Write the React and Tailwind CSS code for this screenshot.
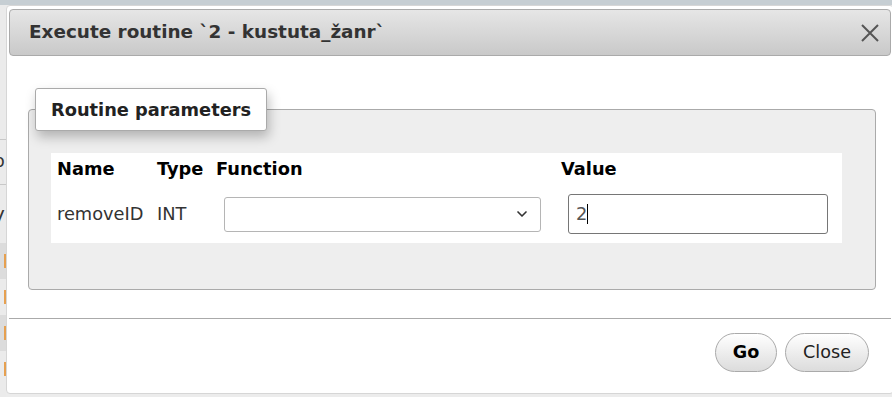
import { ChevronDown } from "lucide-react";

const font = { fontFamily: '"DejaVu Sans", Verdana, sans-serif' };

function PageStrip() {
  // slice of the page that sits behind the dialog
  return (
    <div className="w-[6px] shrink-0 flex flex-col bg-[#ebebeb] overflow-hidden text-[17.6px] leading-none text-[#333]">
      <div className="h-[135px] border-b border-[#c8c8c8]" />
      <div className="h-[45px] border-b border-[#c8c8c8] flex items-center -ml-[6px]">o</div>
      <div className="h-[58px] flex items-center -ml-[7px] text-[20px]">y</div>
      <div className="h-[36px] bg-[#dcdcdc] flex items-center">
        <span className="w-[2px] h-[14px] bg-[#e6a050] ml-[4px]" />
      </div>
      <div className="h-[36px] flex items-center">
        <span className="w-[2px] h-[14px] bg-[#e6a050] ml-[4px]" />
      </div>
      <div className="h-[36px] bg-[#dcdcdc] flex items-center">
        <span className="w-[2px] h-[14px] bg-[#e6a050] ml-[4px]" />
      </div>
      <div className="h-[36px] flex items-center">
        <span className="w-[2px] h-[14px] bg-[#e6a050] ml-[4px]" />
      </div>
    </div>
  );
}

function CloseIcon() {
  return (
    <svg width="20" height="20" viewBox="0 0 20 20" className="block">
      <path d="M2 2 L18 18 M18 2 L2 18" stroke="#555" strokeWidth="2" fill="none" />
    </svg>
  );
}

export default function App() {
  return (
    <div className="w-[892px] h-[397px] overflow-hidden bg-[#ececec] flex flex-col" style={font}>
      <div className="h-[5px] shrink-0 bg-[#c6ced3]" />
      <div className="flex flex-1 min-h-0">
        <PageStrip />
        <div className="w-[888px] shrink-0 h-[389px] bg-white rounded-[4px] border border-[#d6d6d6] flex flex-col px-[2px] pt-[3px]">
          {/* title bar */}
          <div className="h-[47px] shrink-0 flex items-center justify-between rounded-[4px] border border-[#aaa] bg-gradient-to-b from-[#e6e6e6] to-[#c9c9c9] pl-[19px] pr-[10px]">
            <span className="text-[18.4px] font-bold text-[#333] leading-none">
              Execute routine `2 - kustuta_žanr`
            </span>
            <CloseIcon />
          </div>

          {/* body */}
          <div className="flex-1 pl-[19px] pr-[15px] pt-[53px]">
            <div className="relative h-[181px] rounded-[4px] border border-[#aaa] bg-[#eeeeee] pt-[43px] pl-[22px]">
              <div className="absolute left-[6px] -top-[22px] h-[43px] px-[15px] flex items-center bg-white border border-[#aaa] rounded-[3px] shadow-[2px_6px_12px_rgba(0,0,0,0.25)]">
                <span className="text-[17.8px] font-bold text-[#222] leading-none">Routine parameters</span>
              </div>

              <div className="w-[791px] bg-white text-[17.8px] leading-none">
                <div className="h-[32px] flex items-center font-bold text-black">
                  <div className="w-[100px] pl-[6px]">Name</div>
                  <div className="w-[59px] pl-[6px]">Type</div>
                  <div className="w-[345px] pl-[6px]">Function</div>
                  <div className="pl-[6px]">Value</div>
                </div>
                <div className="h-[58px] flex items-center text-[#333]">
                  <div className="w-[100px] pl-[6px]">removeID</div>
                  <div className="w-[59px] pl-[6px]">INT</div>
                  <div className="w-[345px] pl-[14px]">
                    <div className="w-[317px] h-[35px] rounded-[3px] border border-[#b5b5b5] bg-white flex items-center justify-end pr-[10px]">
                      <ChevronDown size={16} strokeWidth={2.5} color="#333" />
                    </div>
                  </div>
                  <div className="pl-[13px]">
                    <div className="w-[260px] h-[40px] rounded-[3px] border border-[#767676] bg-white flex items-center pl-[7px] text-[#555]">
                      2<span className="w-[1px] h-[20px] bg-black" />
                    </div>
                  </div>
                </div>
              </div>
            </div>
          </div>

          {/* footer */}
          <div className="h-[75px] shrink-0 border-t border-[#aaa] flex items-start justify-end gap-[8px] pt-[14px] pr-[22px]">
            <button className="h-[39px] w-[62px] rounded-full border border-[#aaa] bg-gradient-to-b from-[#ffffff] to-[#dcdcdc] text-[17.6px] font-bold text-black leading-none">
              Go
            </button>
            <button className="h-[39px] w-[84px] rounded-full border border-[#aaa] bg-gradient-to-b from-[#ffffff] to-[#dcdcdc] text-[17.6px] text-[#222] leading-none">
              Close
            </button>
          </div>
        </div>
      </div>
    </div>
  );
}
